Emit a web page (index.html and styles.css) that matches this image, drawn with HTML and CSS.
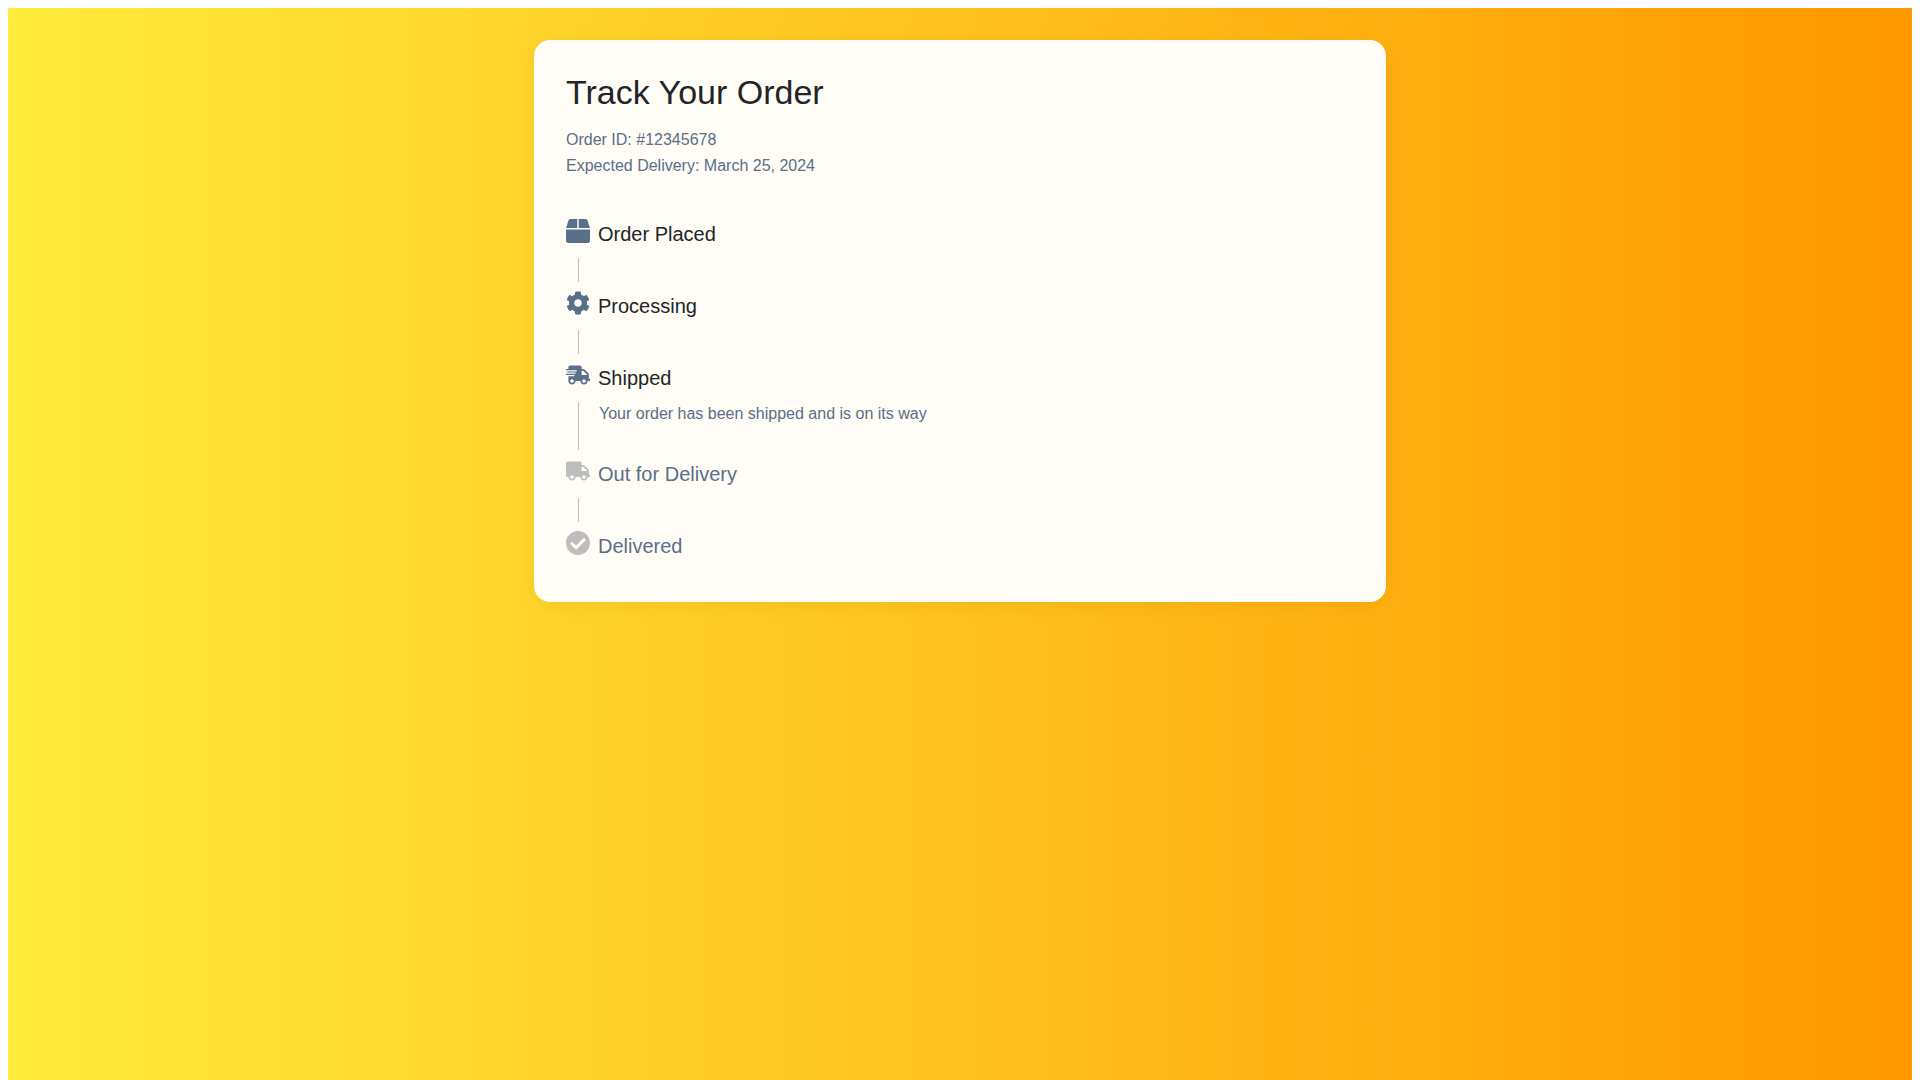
FILE: index.html
```html
<!DOCTYPE html>
<html lang="en">
<head>
  <meta charset="UTF-8" />
  <meta name="viewport" content="width=device-width, initial-scale=1" />
  <title>Track Your Order</title>
  <link rel="stylesheet" href="styles.css">
</head>
<body>
  <div class="page">
    <main class="card">
      <h1>Track Your Order</h1>
      <div class="meta">
        <p>Order ID: #12345678</p>
        <p>Expected Delivery: March 25, 2024</p>
      </div>

      <ol class="steps">
        <li class="step">
          <div class="step-label">
            <svg class="icon" viewBox="0 0 512 512" aria-hidden="true"><path d="M509.500 184.600L458.900 32.800C452.400 13.200 434.100 0 413.400 0H272v192h238.700c-.4-2.500-.4-5-1.200-7.400zM240 0H98.600c-20.700 0-39 13.200-45.500 32.800L2.500 184.600c-.8 2.400-.8 4.900-1.200 7.400H240V0zM0 224v240c0 26.500 21.500 48 48 48h416c26.500 0 48-21.500 48-48V224H0z"/></svg>
            <span>Order Placed</span>
          </div>
          <div class="step-content"></div>
        </li>
        <li class="step">
          <div class="step-label">
            <svg class="icon" viewBox="0 0 512 512" aria-hidden="true"><path d="M487.400 315.700l-42.600-24.600c4.300-23.200 4.300-47 0-70.200l42.600-24.600c4.900-2.800 7.100-8.600 5.500-14-11.100-35.600-30-67.800-54.700-94.600-3.800-4.100-10-5.100-14.800-2.300L380.800 110c-17.900-15.400-38.500-27.300-60.800-35.100V25.800c0-5.600-3.900-10.500-9.400-11.700-36.700-8.200-74.300-7.800-109.200 0-5.500 1.200-9.400 6.100-9.400 11.700V75c-22.200 7.900-42.800 19.800-60.800 35.100L88.700 85.500c-4.900-2.800-11-1.900-14.800 2.300-24.700 26.700-43.600 58.900-54.700 94.600-1.700 5.400.6 11.200 5.500 14L67.300 221c-4.300 23.200-4.300 47 0 70.200l-42.600 24.600c-4.900 2.800-7.100 8.600-5.500 14 11.100 35.600 30 67.800 54.700 94.600 3.800 4.100 10 5.100 14.800 2.300l42.600-24.600c17.900 15.400 38.500 27.300 60.800 35.100v49.200c0 5.600 3.900 10.500 9.400 11.700 36.700 8.200 74.300 7.800 109.200 0 5.500-1.200 9.400-6.100 9.400-11.700v-49.200c22.200-7.900 42.800-19.800 60.800-35.100l42.600 24.600c4.900 2.800 11 1.900 14.800-2.300 24.700-26.700 43.600-58.900 54.700-94.600 1.500-5.500-.7-11.300-5.600-14.100zM256 336c-44.100 0-80-35.900-80-80s35.900-80 80-80 80 35.900 80 80-35.900 80-80 80z"/></svg>
            <span>Processing</span>
          </div>
          <div class="step-content"></div>
        </li>
        <li class="step">
          <div class="step-label">
            <svg class="icon" viewBox="0 0 640 512" aria-hidden="true"><path d="M624 352h-16V243.900c0-12.700-5.100-24.900-14.100-33.900L494 110.100c-9-9-21.200-14.100-33.900-14.100H416V48c0-26.500-21.500-48-48-48H112C85.500 0 64 21.500 64 48v48H8c-4.400 0-8 3.600-8 8v16c0 4.400 3.600 8 8 8h272c4.400 0 8 3.600 8 8v16c0 4.400-3.600 8-8 8H40c-4.400 0-8 3.600-8 8v16c0 4.400 3.600 8 8 8h208c4.400 0 8 3.600 8 8v16c0 4.400-3.600 8-8 8H8c-4.400 0-8 3.600-8 8v16c0 4.400 3.600 8 8 8h208c4.400 0 8 3.600 8 8v16c0 4.400-3.600 8-8 8H64v128c0 53 43 96 96 96s96-43 96-96h128c0 53 43 96 96 96s96-43 96-96h48c8.800 0 16-7.200 16-16v-32c0-8.800-7.200-16-16-16zM160 464c-26.500 0-48-21.500-48-48s21.500-48 48-48 48 21.500 48 48-21.500 48-48 48zm320 0c-26.500 0-48-21.500-48-48s21.500-48 48-48 48 21.500 48 48-21.500 48-48 48zm80-208H416V144h44.100l99.900 99.900V256z"/></svg>
            <span>Shipped</span>
          </div>
          <div class="step-content">
            <p>Your order has been shipped and is on its way</p>
          </div>
        </li>
        <li class="step pending">
          <div class="step-label">
            <svg class="icon" viewBox="0 0 640 512" aria-hidden="true"><path d="M624 352h-16V243.900c0-12.700-5.100-24.900-14.100-33.900L494 110.100c-9-9-21.200-14.100-33.900-14.100H416V48c0-26.500-21.500-48-48-48H48C21.500 0 0 21.500 0 48v320c0 26.500 21.500 48 48 48h16c0 53 43 96 96 96s96-43 96-96h128c0 53 43 96 96 96s96-43 96-96h48c8.800 0 16-7.200 16-16v-32c0-8.800-7.200-16-16-16zM160 464c-26.500 0-48-21.500-48-48s21.500-48 48-48 48 21.500 48 48-21.500 48-48 48zm320 0c-26.500 0-48-21.500-48-48s21.500-48 48-48 48 21.500 48 48-21.500 48-48 48zm80-208H416V144h44.100l99.900 99.900V256z"/></svg>
            <span>Out for Delivery</span>
          </div>
          <div class="step-content"></div>
        </li>
        <li class="step pending">
          <div class="step-label">
            <svg class="icon" viewBox="8 8 496 496" aria-hidden="true"><path d="M504 256c0 136.967-111.033 248-248 248S8 392.967 8 256 119.033 8 256 8s248 111.033 248 248zM227.314 387.314l184-184c6.248-6.248 6.248-16.379 0-22.627l-22.627-22.627c-6.248-6.249-16.379-6.249-22.628 0L216 308.118l-70.059-70.059c-6.248-6.248-16.379-6.248-22.628 0l-22.627 22.627c-6.248 6.248-6.248 16.379 0 22.627l104 104c6.249 6.249 16.379 6.249 22.628.001z"/></svg>
            <span>Delivered</span>
          </div>
        </li>
      </ol>
    </main>
  </div>
</body>
</html>
```
FILE: styles.css
```css
* {
  box-sizing: border-box;
}

body {
  font-family: "Liberation Sans", Arial, sans-serif;
  color: #212529;
  background: #fff;
}

.page {
  min-height: 100vh;
  padding: 32px 24px;
  background: linear-gradient(to right, #ffeb3b, #ff9800);
}

.card {
  max-width: 852px;
  margin: 0 auto;
  padding: 32px;
  background: #fffdf5;
  border-radius: 16px;
  box-shadow: 0 4px 20px rgba(0, 0, 0, 0.05);
}

h1 {
  margin: 0 0 16px;
  font-size: 34px;
  font-weight: 400;
  line-height: 40px;
}

.meta {
  display: flex;
  flex-direction: column;
  gap: 2px;
  color: #5a6f8a;
}

p {
  margin: 0;
  font-size: 16px;
  line-height: 24px;
}

.steps {
  list-style: none;
  margin: 40px 0 0;
  padding: 0 0 8px;
}

.step-label {
  display: flex;
  gap: 8px;
  font-size: 20px;
  line-height: 32px;
}

.icon {
  width: 24px;
  height: 24px;
  margin-top: 1px;
  fill: #5a6f8a;
}

/* vertical line joining a step to the next one */
.step-content {
  min-height: 24px;
  margin: 8px 0 8px 12px;
  padding-left: 20px;
  border-left: 1px solid #bdbdbd;
}

.step-content p {
  padding-bottom: 24px;
  color: #5a6f8a;
}

.pending {
  color: #5a6f8a;
}

.pending .icon {
  fill: #bdbdbd;
}
```
